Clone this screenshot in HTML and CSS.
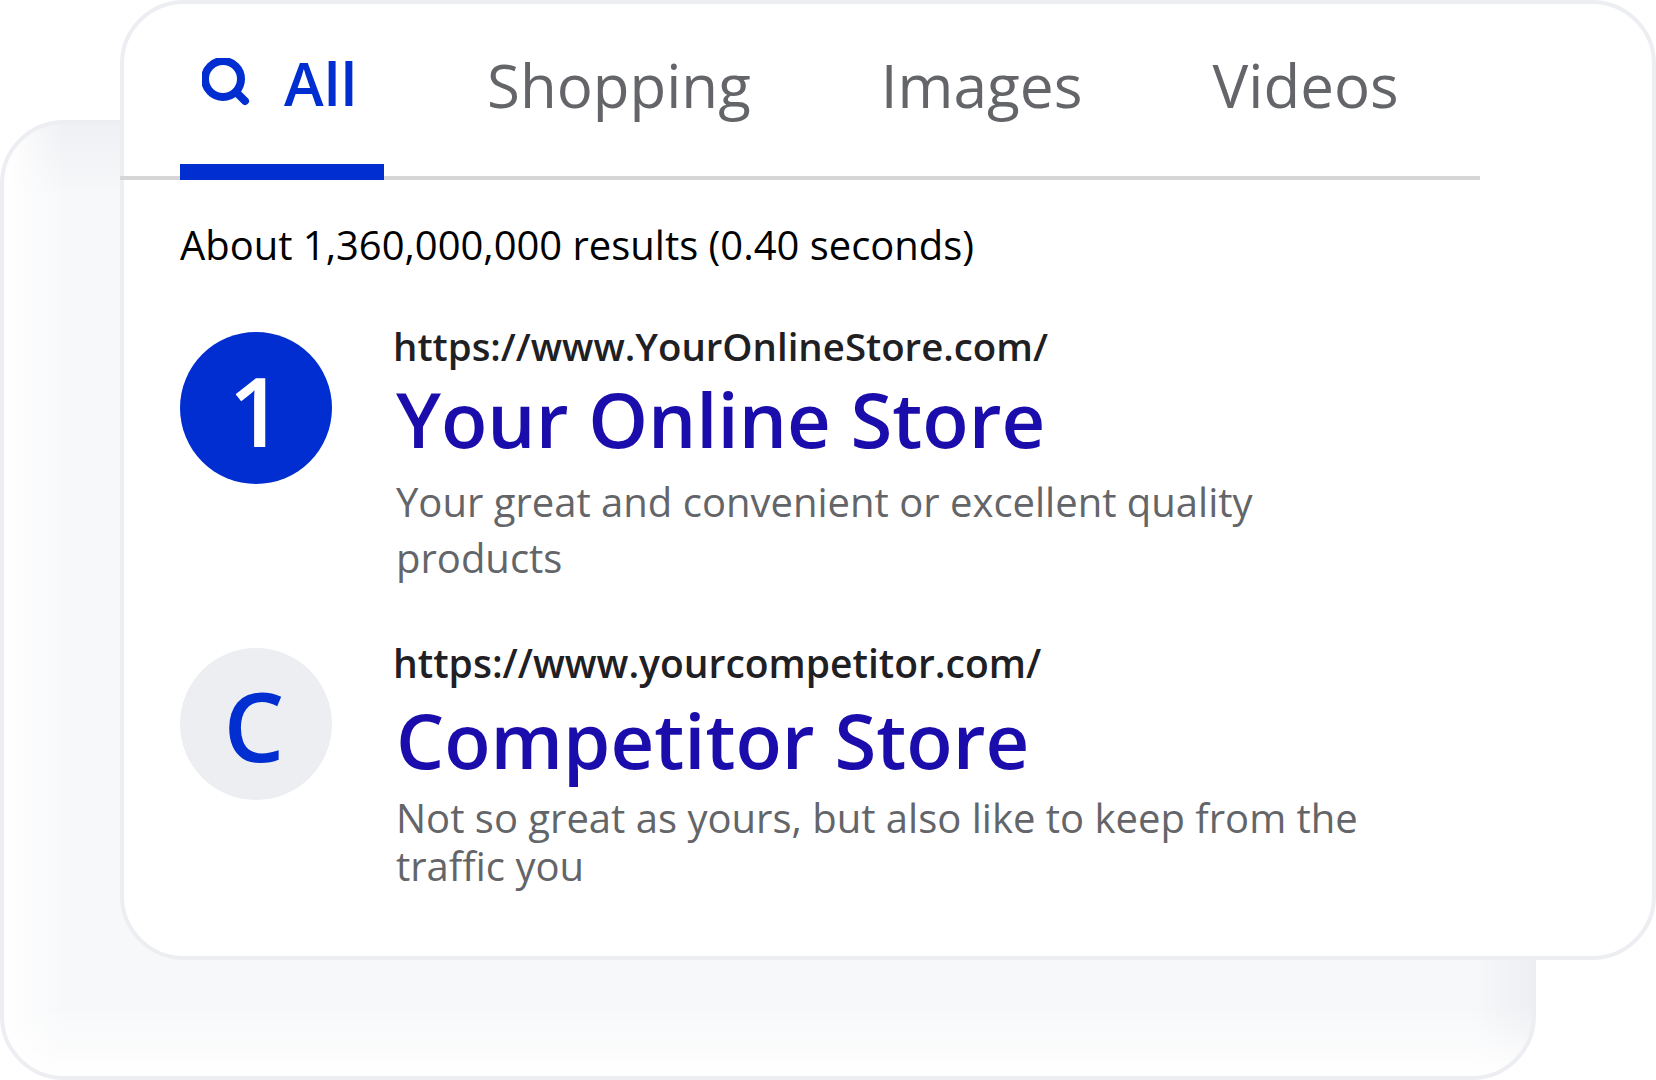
FILE: index.html
```html
<!DOCTYPE html>
<html lang="en">
<head>
<meta charset="utf-8">
<title>Search results</title>
<link rel="stylesheet" href="styles.css">
</head>
<body>
<div class="stage">
  <div class="back-card"></div>
  <main class="card">
    <nav class="tabs">
      <a class="tab tab-active">
        <svg class="search-icon" viewBox="0 0 48 48" width="48" height="48" aria-hidden="true"><circle cx="21" cy="21" r="18" fill="none" stroke="#002ed1" stroke-width="8"/><path d="M34 34 L43 43" fill="none" stroke="#002ed1" stroke-width="8" stroke-linecap="round"/></svg>
        <span>All</span>
      </a>
      <a class="tab tab-shopping">Shopping</a>
      <a class="tab tab-images">Images</a>
      <a class="tab tab-videos">Videos</a>
    </nav>
    <p class="stats">About 1,360,000,000 results (0.40 seconds)</p>
    <section class="result result-first">
      <div class="badge badge-primary">1</div>
      <div class="result-body">
        <div class="url url-first">https://www.YourOnlineStore.com/</div>
        <h2 class="title title-first">Your Online Store</h2>
        <p class="desc desc-loose">Your great and convenient or excellent quality products</p>
      </div>
    </section>
    <section class="result result-second">
      <div class="badge badge-muted">C</div>
      <div class="result-body">
        <div class="url url-second">https://www.yourcompetitor.com/</div>
        <h2 class="title title-second">Competitor Store</h2>
        <p class="desc desc-tight">Not so great as yours, but also like to keep from the traffic you</p>
      </div>
    </section>
  </main>
</div>
</body>
</html>
```
FILE: styles.css
```css
* { box-sizing: border-box; }
html, body { margin: 0; padding: 0; background: #fff; }
body { width: 1656px; height: 1080px; overflow: hidden; font-family: "Open Sans", sans-serif; }
.stage { position: relative; width: 1656px; height: 1080px; }
.back-card {
  position: absolute; left: 0; top: 120px; width: 1536px; height: 960px;
  border: 4px solid #edeef2; border-radius: 64px;
  background:
    linear-gradient(to right, #fff 0, rgba(255,255,255,0) 60px),
    linear-gradient(to top, #fff 0, rgba(255,255,255,0) 70px),
    linear-gradient(to bottom, #eff0f3 0, rgba(239,240,243,0) 70px),
    linear-gradient(to left, #eeeff2 0, rgba(238,239,242,0) 60px),
    #f7f8fa;
}
.card {
  position: absolute; left: 120px; top: 0; width: 1536px; height: 960px;
  background: #fff; border: 4px solid #edeef2; border-radius: 64px;
  padding: 0 0 0 56px;
}
.tabs {
  display: flex; align-items: flex-start; height: 176px; width: 1360px;
  margin-left: -60px; padding-left: 60px; border-bottom: 4px solid #d6d6d6;
}
.tab { font-size: 60px; line-height: 82px; color: #636569; padding-top: 40px; height: 176px; }
.tab-active {
  display: flex; align-items: flex-start; width: 204px; height: 176px; padding-left: 22px; padding-top: 38px;
  color: #002ed1; font-weight: 600; border-bottom: 16px solid #002ed1; flex: none;
}
.search-icon { margin-top: 16px; margin-right: 34px; flex: none; }
.tab-shopping { margin-left: 103px; }
.tab-images { margin-left: 130px; font-size: 60.4px; }
.tab-videos { margin-left: 130px; }
.stats { margin: 38px 0 0; font-size: 39.95px; line-height: 54px; color: #000; }
.result { display: flex; }
.result-first { margin-top: 48px; }
.result-second { margin-top: 51px; }
.badge {
  flex: none; width: 152px; height: 152px; border-radius: 50%;
  display: flex; align-items: center; justify-content: center;
  font-size: 96px; font-weight: 600; padding-top: 2px;
}
.result-first .badge { margin-top: 12px; }
.result-second .badge { margin-top: 11px; padding-right: 4px; padding-top: 0; }
.badge-primary { background: #002ed1; color: #fff; }
.badge-muted { background: #edeef2; color: #002ed1; }
.result-body { margin-left: 61px; width: 1001px; flex: none; }
.url { font-size: 38px; line-height: 52px; font-weight: 600; color: #1f2023; }
.url-first { font-size: 38.4px; }
.url-second { font-size: 39px; }
.title { margin: 0; font-size: 76px; line-height: 100px; font-weight: 600; color: #1a0dab; padding-left: 3px; }
.title-first { margin-top: -3px; }
.title-second { margin-top: 1px; }
.desc { margin: 0; font-size: 40px; color: #636569; padding-left: 3px; }
.desc-loose { line-height: 56px; margin-top: 5px; }
.desc-tight { line-height: 48px; margin-top: 4px; }
```
